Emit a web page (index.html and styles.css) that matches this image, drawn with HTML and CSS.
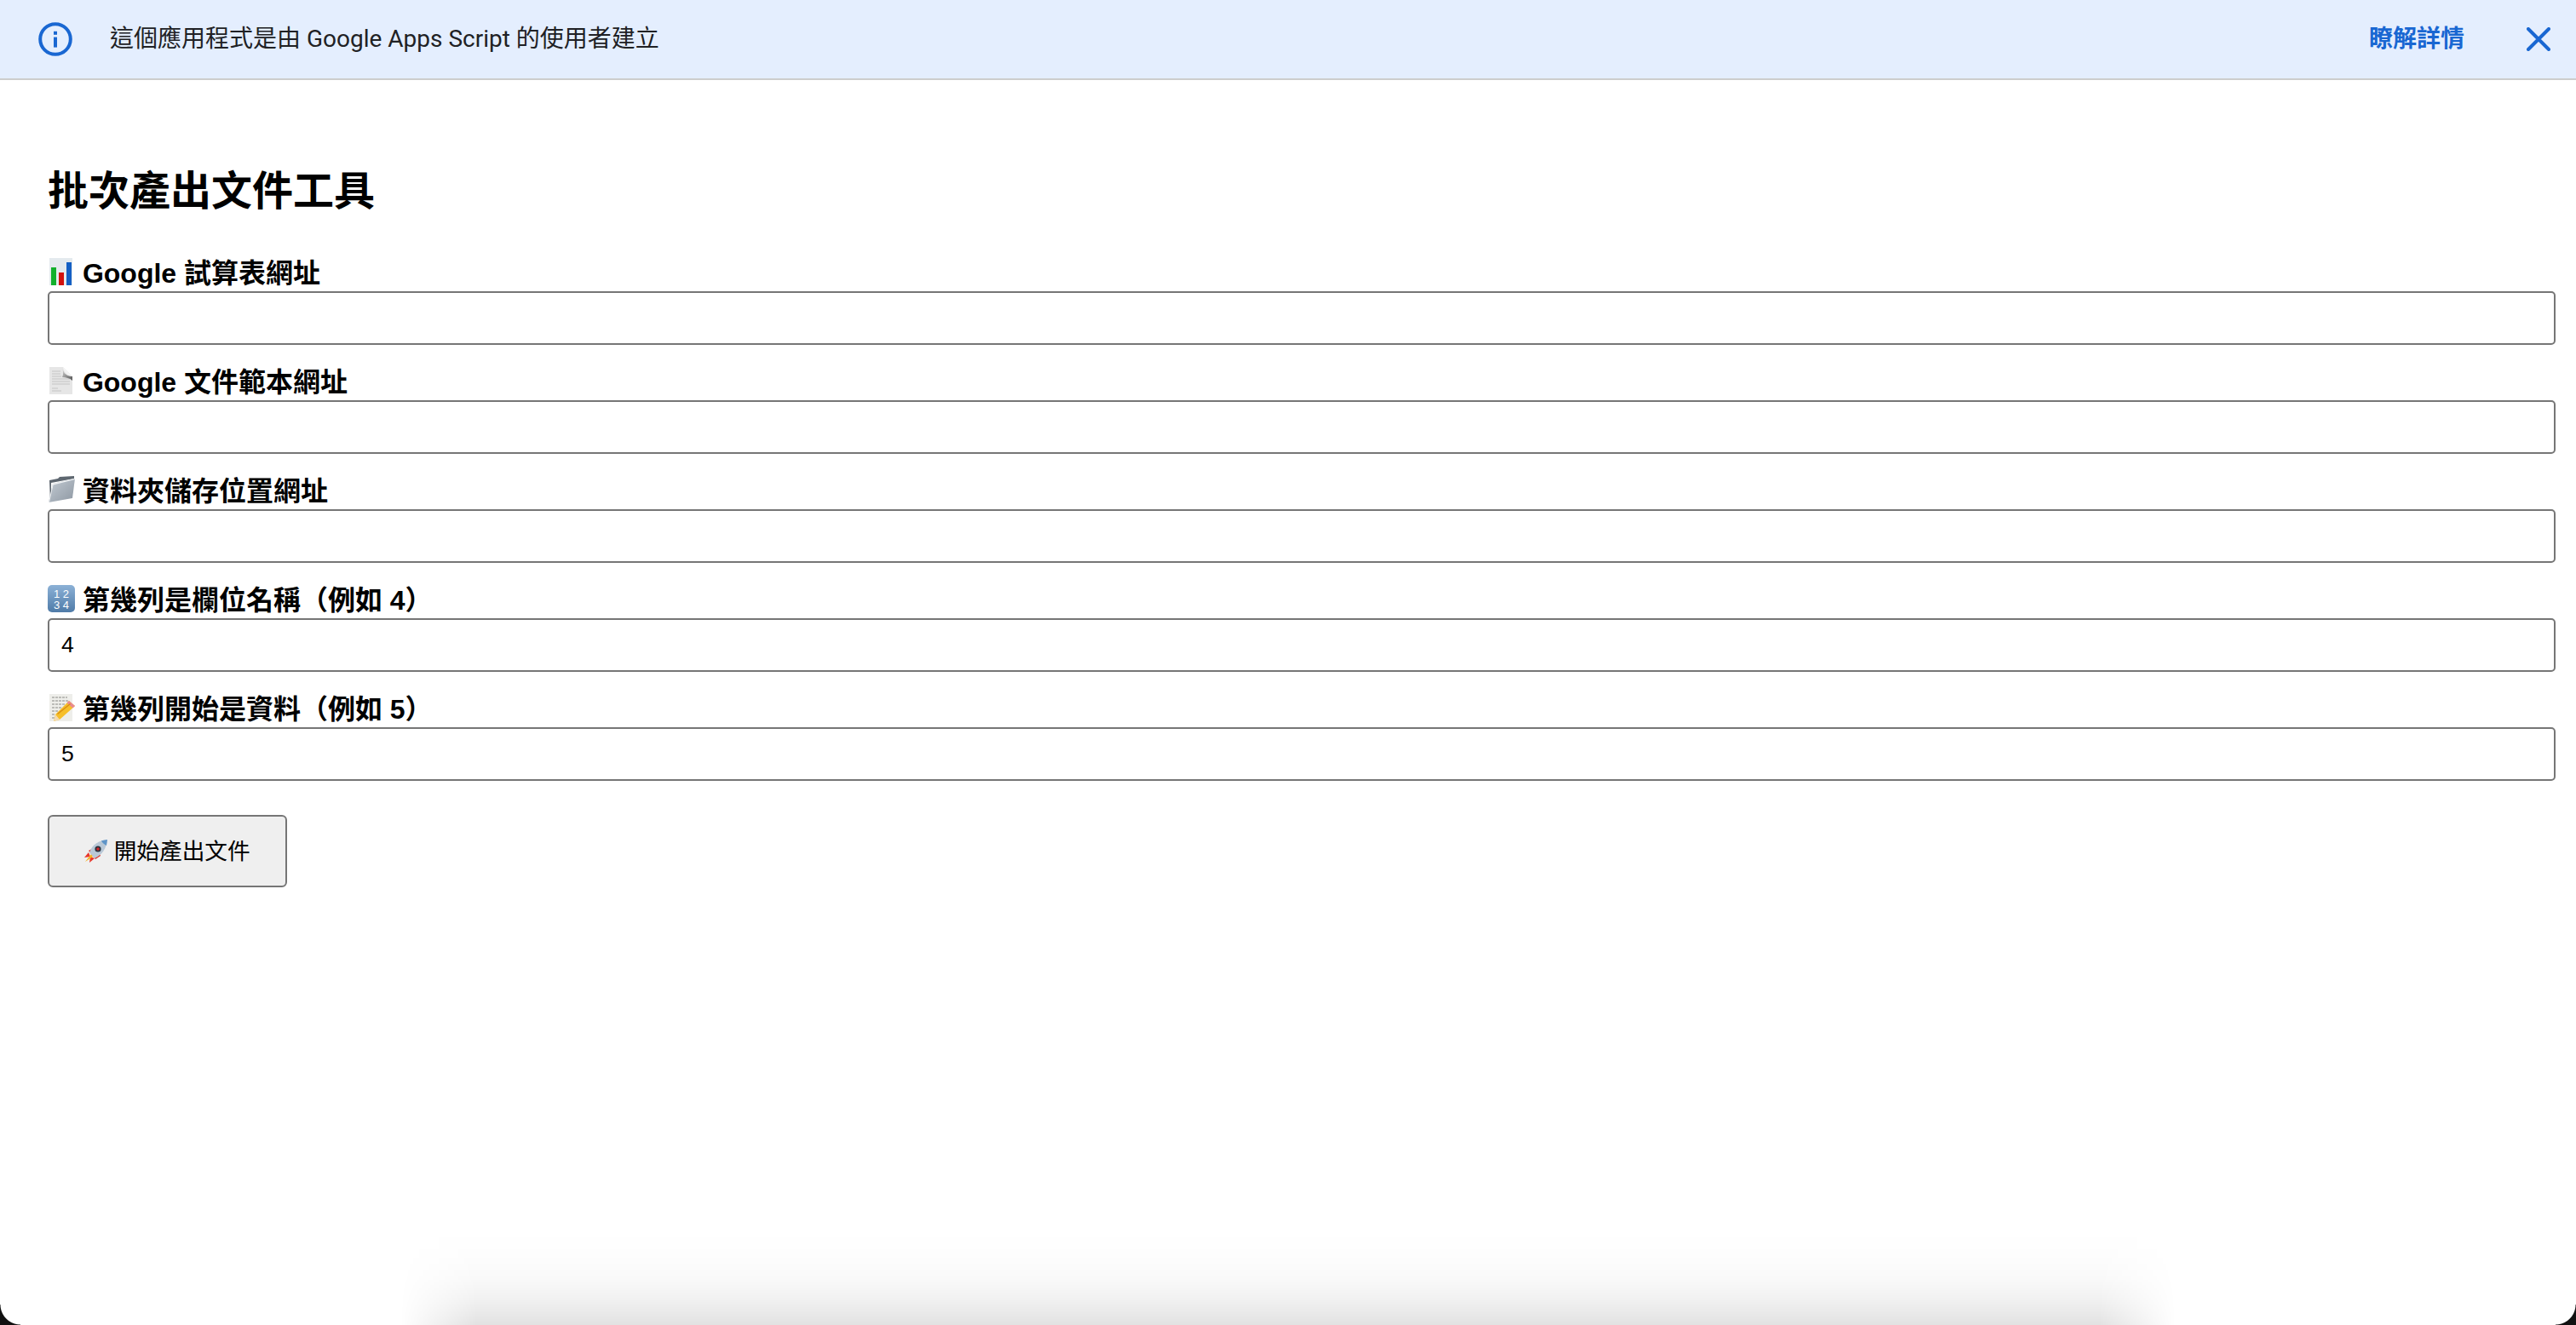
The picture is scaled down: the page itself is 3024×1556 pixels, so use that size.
FILE: index.html
```html
<!DOCTYPE html>
<html lang="zh-Hant">
<head>
<meta charset="utf-8">
<title>批次產出文件工具</title>
<link rel="stylesheet" href="styles.css">
</head>
<body>
<div class="banner">
  <svg class="info-icon" viewBox="0 0 40 40" aria-hidden="true">
    <circle cx="20" cy="20" r="17.8" fill="none" stroke="#1967d2" stroke-width="4"/>
    <rect x="18" y="17.6" width="4" height="12" fill="#1967d2"/>
    <rect x="18" y="10.8" width="4" height="4" fill="#1967d2"/>
  </svg>
  <span class="banner-text">這個應用程式是由 Google Apps Script 的使用者建立</span>
  <a class="banner-link">瞭解詳情</a>
  <svg class="close-icon" viewBox="0 0 28 28" aria-hidden="true">
    <path d="M2 2L26 26M26 2L2 26" stroke="#1967d2" stroke-width="4" stroke-linecap="round" fill="none"/>
  </svg>
</div>

<main class="page">
  <h1 class="title">批次產出文件工具</h1>

  <div class="field">
    <label class="field-label">
      <svg class="emoji" viewBox="0 0 32 32" aria-hidden="true">
        <rect x="2" y="0" width="27" height="32" fill="#e4eaee"/>
        <rect x="4" y="11" width="6" height="21" fill="#12b02c"/>
        <rect x="13" y="17" width="6" height="15" fill="#d2120e"/>
        <rect x="22" y="5" width="6" height="27" fill="#1560c4"/>
      </svg> Google 試算表網址
    </label>
    <input class="text-input" type="text">
  </div>

  <div class="field">
    <label class="field-label">
      <svg class="emoji" viewBox="0 0 32 32" aria-hidden="true">
        <defs>
          <linearGradient id="fold" x1="0" y1="0" x2="1" y2="1">
            <stop offset="0" stop-color="#d8d8d8"/>
            <stop offset="1" stop-color="#555"/>
          </linearGradient>
        </defs>
        <path d="M2 0H18L29 11V32H2Z" fill="#e6e6e6"/>
        <path d="M5 5H15M5 8H15M5 11H16M5 14H26M5 17H26M5 20H26M5 25H12M5 28H16" stroke="#cfcfcf" stroke-width="1.3"/>
        <path d="M17 0C18 5 20 11 29 11V16C26 13 21 12 17 12C19 8 18 4 17 0Z" fill="url(#fold)"/>
        <path d="M18 0L29 11C24 10 19 7 18 0Z" fill="#f4f4f4"/>
      </svg> Google 文件範本網址
    </label>
    <input class="text-input" type="text">
  </div>

  <div class="field">
    <label class="field-label">
      <svg class="emoji" viewBox="0 0 32 32" aria-hidden="true">
        <defs>
          <linearGradient id="folder" x1="0" y1="0" x2="1" y2="1">
            <stop offset="0" stop-color="#c4ccd4"/>
            <stop offset="1" stop-color="#8d97a2"/>
          </linearGradient>
        </defs>
        <path d="M2 5L12 3L14 1L31 0V3L4 8V30H3Z" fill="#5e6770"/>
        <path d="M6 9L32 3L29 26L1 31Z" fill="url(#folder)"/>
        <path d="M6 9L32 3V4L6.5 10.500L2 31H1Z" fill="#eef1f3"/>
      </svg> 資料夾儲存位置網址
    </label>
    <input class="text-input" type="text">
  </div>

  <div class="field">
    <label class="field-label">
      <svg class="emoji" viewBox="0 0 32 32" aria-hidden="true">
        <defs>
          <linearGradient id="keycap" x1="0" y1="0" x2="0" y2="1">
            <stop offset="0" stop-color="#8cb1d6"/>
            <stop offset="1" stop-color="#4f7ba8"/>
          </linearGradient>
        </defs>
        <rect x="0" y="0" width="32" height="32" rx="5" fill="url(#keycap)"/>
        <text class="keycap-text" x="16" y="15" text-anchor="middle">1 2</text>
        <text class="keycap-text" x="16" y="28" text-anchor="middle">3 4</text>
      </svg> 第幾列是欄位名稱（例如 4）
    </label>
    <input class="text-input" type="text" value="4">
  </div>

  <div class="field">
    <label class="field-label">
      <svg class="emoji" viewBox="0 0 32 32" aria-hidden="true">
        <rect x="2" y="0" width="27" height="32" fill="#eeeeea"/>
        <path d="M5 4H23M5 8H24M5 12H20M5 16H16M5 20H12M5 24H9M5 28H8" stroke="#8a8a86" stroke-width="1.2" stroke-dasharray="3 1"/>
        <path d="M25 8L32 14L14 30L7 32L9 24Z" fill="#f6bf2a"/>
        <path d="M25 8L32 14L29.500 16.500L22.500 10.500Z" fill="#e98a92"/>
        <path d="M9 24L14 30L7 32Z" fill="#f3dcb4"/>
        <path d="M11.500 23.500L26.500 11.500" stroke="#d98d12" stroke-width="1.4"/>
      </svg> 第幾列開始是資料（例如 5）
    </label>
    <input class="text-input" type="text" value="5">
  </div>

  <button class="submit" type="button">
    <svg class="emoji emoji-small" viewBox="0 0 27 27" aria-hidden="true">
      <path d="M5 15L0 21L7 20Z" fill="#e8352a"/>
      <path d="M12 22L6 27L7 20Z" fill="#e8352a"/>
      <path d="M8 17L1 26L10 20Z" fill="#f7b21e"/>
      <path d="M5 13L14 8L19 19L13 23Z" fill="#dd2e26"/>
      <path d="M6 15C9 6 17 1 27 0C26 10 21 18 12 22Z" fill="#b9c8d6"/>
      <path d="M20 1.300L27 0L26 7C24 6 21 4 20 1.300Z" fill="#5f95c8"/>
      <circle cx="16" cy="11" r="3.600" fill="#28333e"/>
      <circle cx="16" cy="11" r="1.800" fill="#d1262b"/>
    </svg> 開始產出文件
  </button>
</main>

<div class="bottom-shadow"></div>
<div class="corner corner-left"></div>
<div class="corner corner-right"></div>
</body>
</html>
```

FILE: styles.css
```css
html, body {
  margin: 0;
  padding: 0;
  height: 100%;
  background: #ffffff;
  overflow: hidden;
}

body {
  font-family: "Liberation Sans", "Noto Sans CJK TC", sans-serif;
  color: #000000;
}

.banner {
  display: flex;
  align-items: center;
  box-sizing: border-box;
  height: 94px;
  padding: 0 30px 0 45px;
  background: #e4eefe;
  border-bottom: 2px solid #cdcdcd;
  font-family: Roboto, "Noto Sans CJK TC", sans-serif;
  font-size: 28px;
  line-height: 40px;
}

.info-icon {
  flex: none;
  width: 40px;
  height: 40px;
  margin-right: 44px;
}

.banner-text {
  flex: 1;
  color: #202124;
}

.banner-link {
  color: #1967d2;
  font-weight: 700;
  margin-right: 73px;
}

.close-icon {
  flex: none;
  width: 28px;
  height: 28px;
}

.page {
  padding: 0 24px 0 56px;
}

.title {
  margin: 0 0 50px;
  padding-top: 103px;
  font-size: 48px;
  font-weight: 700;
  line-height: 56px;
}

.field {
  margin-bottom: 26px;
}

.field-label {
  display: block;
  height: 27px;
  margin-bottom: 12px;
  font-size: 32px;
  font-weight: 700;
  line-height: 27px;
  white-space: nowrap;
}

.emoji {
  display: inline-block;
  width: 32px;
  height: 32px;
  vertical-align: -3px;
}

.keycap-text {
  fill: #ffffff;
  font-family: "Liberation Sans", sans-serif;
  font-size: 13px;
  font-weight: 400;
}

.text-input {
  display: block;
  box-sizing: border-box;
  width: 100%;
  height: 63px;
  margin: 0;
  padding: 0 14px;
  background: #ffffff;
  border: 2px solid #767676;
  border-radius: 5px;
  font-family: "Liberation Sans", sans-serif;
  font-size: 26.67px;
  color: #000000;
}

.submit {
  display: block;
  box-sizing: border-box;
  width: 281px;
  height: 85px;
  margin: 40px 0 0;
  padding: 0;
  background: #efefef;
  border: 2px solid #767676;
  border-radius: 6px;
  font-family: "Liberation Sans", "Noto Sans CJK TC", sans-serif;
  font-size: 26.67px;
  line-height: 32px;
  color: #000000;
  white-space: nowrap;
}

.emoji-small {
  width: 27px;
  height: 27px;
  vertical-align: -4px;
}

.bottom-shadow {
  position: fixed;
  left: 470px;
  right: 470px;
  bottom: 0;
  height: 110px;
  pointer-events: none;
  background: linear-gradient(to bottom, rgba(0,0,0,0) 0%, rgba(0,0,0,0.008) 25%, rgba(0,0,0,0.025) 50%, rgba(0,0,0,0.06) 75%, rgba(0,0,0,0.115) 100%);
  -webkit-mask-image: linear-gradient(to right, transparent 0, #000 90px, #000 calc(100% - 90px), transparent 100%);
  mask-image: linear-gradient(to right, transparent 0, #000 90px, #000 calc(100% - 90px), transparent 100%);
}

.corner {
  position: fixed;
  bottom: 0;
  width: 24px;
  height: 24px;
  pointer-events: none;
}

.corner-left {
  left: 0;
  background: radial-gradient(circle at 100% 0, transparent 23px, #111111 24px);
}

.corner-right {
  right: 0;
  background: radial-gradient(circle at 0 0, transparent 23px, #111111 24px);
}
```
